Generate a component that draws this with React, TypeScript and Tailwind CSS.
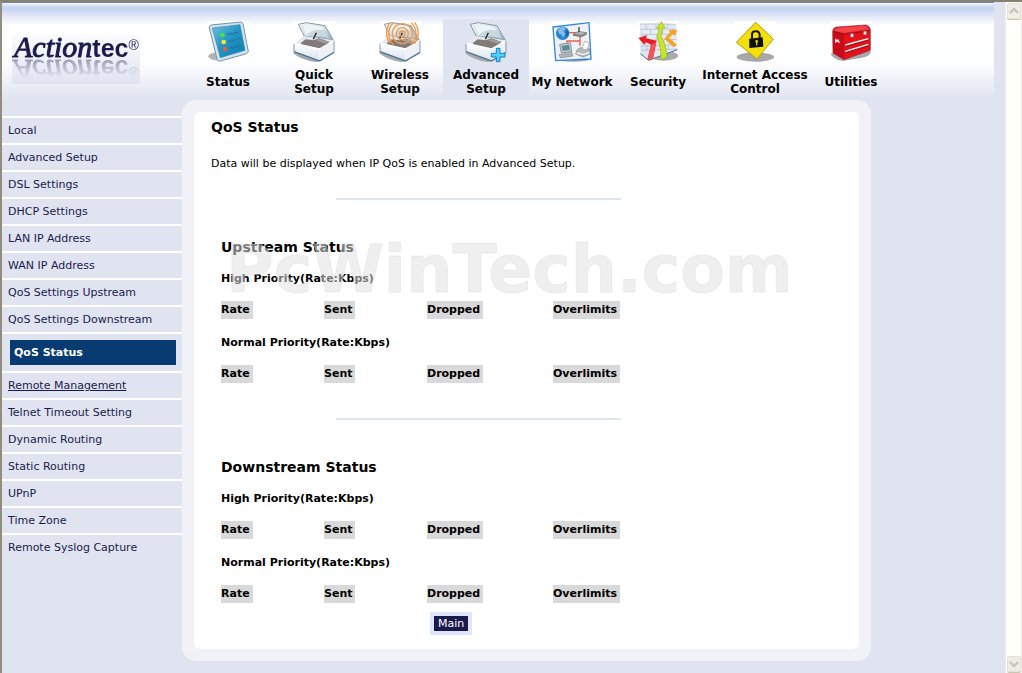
import React from "react";

const IconFrame = ({ children }: { children: React.ReactNode }) => {
  return (
    <svg viewBox="0 0 126 126" className="block h-[42px] w-[42px]" aria-hidden="true">
      {children}
    </svg>
  );
};

const StatusIcon = () => (
  <IconFrame>
    <defs>
      <linearGradient id="screen" x1="0" y1="0" x2="1" y2="1">
        <stop offset="0" stopColor="#6fc0de" />
        <stop offset="0.5" stopColor="#1f93c4" />
        <stop offset="1" stopColor="#0b7db3" />
      </linearGradient>
    </defs>
    <rect width="126" height="126" fill="#fff" />
    <ellipse cx="34" cy="106" rx="30" ry="12" fill="#b4b4b4" />
    <path d="M6 17 L12 12 L102 3 L108 7 L124 92 L119 98 L37 121 L31 118 Z" fill="#d5e2ea" stroke="#6f97b3" strokeWidth="3" />
    <path d="M16 21 L99 11 L114 88 L40 110 Z" fill="url(#screen)" stroke="#3b88ab" strokeWidth="2" />
    <circle cx="46" cy="42" r="7" fill="#3ee83c" />
    <circle cx="50" cy="63" r="7" fill="#f4ea26" />
    <circle cx="54" cy="84" r="7" fill="#ee5a3c" />
    <path d="M59 42 l5 -5 l4 5 l5 -7 l5 5 l6 -7 l5 3 l6 -5 M64 63 l5 -5 l5 4 l6 -7 l3 5 M89 55 l7 -2 M67 84 l5 -5 l5 3 l5 -6 l5 4 l7 -6 l7 2" fill="none" stroke="#2f6590" strokeWidth="3" />
  </IconFrame>
);

const OpenBox = () => (
  <>
    <defs>
      <linearGradient id="lid" x1="0" y1="0" x2="1" y2="1">
        <stop offset="0" stopColor="#fdfeff" />
        <stop offset="0.55" stopColor="#cfdde4" />
        <stop offset="1" stopColor="#93adbb" />
      </linearGradient>
      <linearGradient id="boxside" x1="0" y1="0" x2="0" y2="1">
        <stop offset="0" stopColor="#ffffff" />
        <stop offset="1" stopColor="#d9e2ee" />
      </linearGradient>
    </defs>
    <path d="M2 88 L16 84 L90 118 L68 123 Q30 118 2 98 Z" fill="#a9a9ab" />
    <path d="M16 10 L40 5 L96 14 L121 58 L80 50 L34 46 Z" fill="url(#lid)" stroke="#8298a8" strokeWidth="3" />
    <path d="M25 14 L44 10 L90 18 L108 51 L80 45 L40 42 Z" fill="#c8d8df" />
    <path d="M28 14 L44 10 L88 18 L94 27 Q58 24 40 42 Z" fill="#edf4f6" />
    <path d="M4 67 L32 45 L122 58 L79 84 Z" fill="#e5e9ed" />
    <path d="M23 66 L38 55 L62 58 L79 52 L108 62 L104 72 L79 83 L28 72 Z" fill="#807a7b" />
    <path d="M79 54 L108 63 L100 68 L70 59 Z" fill="#a29c9c" />
    <path d="M61 55 L70 35" stroke="#202020" strokeWidth="4" />
    <path d="M4 67 L79 84 L79 120 L3 92 Z" fill="url(#boxside)" />
    <path d="M79 84 L122 60 L123 94 L79 120 Z" fill="#eef2f8" />
    <path d="M4 67 L79 84 L122 60" fill="none" stroke="#fff" strokeWidth="4" />
    <path d="M3 92 L79 120 L123 94" fill="none" stroke="#487598" strokeWidth="4" />
    <path d="M3 68 L3 92 M123 60 L123 94" stroke="#839cb7" strokeWidth="3" />
  </>
);

const QuickIcon = () => (
  <IconFrame>
    <rect width="126" height="126" fill="#fff" />
    <OpenBox />
  </IconFrame>
);

const WirelessIcon = () => (
  <IconFrame>
    <rect width="126" height="126" fill="#fff" />
    <OpenBox />
    <g fill="none" stroke="#f39a4a" strokeWidth="4">
      <circle cx="70" cy="38" r="8" />
      <circle cx="70" cy="38" r="18" />
      <circle cx="70" cy="38" r="30" />
      <path d="M43 5 Q15 37 43 72 M97 5 Q125 37 97 72 M33 3 Q12 37 33 68 M107 3 Q128 37 107 68" />
    </g>
  </IconFrame>
);

const AdvancedIcon = () => (
  <IconFrame>
    <OpenBox />
    <path d="M94 82 H105 V97 H120 V108 H105 V122 H94 V108 H79 V97 H94 Z" fill="#50d0fa" stroke="#137fc2" strokeWidth="3" />
  </IconFrame>
);

const NetworkIcon = () => (
  <IconFrame>
    <rect width="126" height="126" fill="#fff" />
    <ellipse cx="66" cy="114" rx="52" ry="8" fill="#a8a8aa" />
    <path d="M6 18 L114 5 L120 114 L14 119 Z" fill="#f0f1f5" stroke="#2f86e5" strokeWidth="4" />
    <path d="M48 35 H77 M87 40 V60 H48 V72 M87 58 V74" fill="none" stroke="#f0604a" strokeWidth="4" />
    <circle cx="35" cy="37" r="20" fill="#2584d2" />
    <path d="M20 27 Q29 16 40 19 L44 26 L37 29 L43 38 L36 50 L31 41 L24 38 Z" fill="#85bce6" />
    <path d="M48 25 L53 35 L49 48 L44 38 Z" fill="#1960a8" />
    <path d="M65 39 L82 30 L108 34 L107 41 L91 49 L66 44 Z" fill="#818284" />
    <path d="M70 38 L84 32 L104 35 L91 42 Z" fill="#b0b4b6" />
    <path d="M84 18 V34" stroke="#404246" strokeWidth="4" />
    <path d="M26 70 L58 65 L62 91 L31 96 Z" fill="#c5cccf" stroke="#686e73" strokeWidth="2" />
    <path d="M32 74 L54 71 L57 86 L35 90 Z" fill="#568e9d" />
    <path d="M24 101 L62 94 L66 105 L29 111 Z" fill="#aeb4b5" stroke="#85898b" strokeWidth="2" />
    <path d="M78 87 L88 80 L116 84 L116 100 L96 108 L74 99 Z" fill="#b5b8ba" stroke="#7c8084" strokeWidth="2" />
    <path d="M93 83 L101 61 L115 66 L108 87 Z" fill="#fff" stroke="#95999d" strokeWidth="2" />
    <path d="M77 96 L97 101 L115 94" fill="none" stroke="#f7f7f7" strokeWidth="4" />
  </IconFrame>
);

const SecurityIcon = () => (
  <IconFrame>
    <rect width="126" height="126" fill="#fff" />
    <ellipse cx="80" cy="104" rx="43" ry="15" fill="#aaaaac" />
    <path d="M9 9 L42 18 L42 94 L35 119 L10 97 Z" fill="#dce4ee" />
    <path d="M9 9 L80 4 L118 12 L121 88 L35 119 L42 92 Z" fill="#e7ecf3" />
    <path d="M9 9 L117 10 M12 25 L116 24 M13 41 L118 39 M12 58 L119 55 M12 75 L119 71 M12 88 L119 84 M28 11 V25 M57 10 V24 M92 10 V24 M41 25 V40 M77 25 V40 M106 24 V39 M29 41 V56 M60 40 V56 M94 40 V54 M42 57 V73 M106 56 V70 M30 73 V87 M94 72 V85" stroke="#a9b7c7" strokeWidth="2" />
    <path d="M10 98 L35 118 L121 86" fill="none" stroke="#376aa8" strokeWidth="3" />
    <path d="M4 51 L29 43 L27 52 L59 59 L48 113 L31 117 L42 71 L27 64 L22 71 Z" fill="#e91e25" />
    <path d="M42 71 L57 64 L48 113 L31 117 Z" fill="#f1545a" />
    <path d="M73 2 L85 21 L77 20 L72 45 Q88 72 90 108 L72 116 Q73 77 60 49 L67 20 L59 22 Z" fill="#c8e729" stroke="#90b316" strokeWidth="2" />
    <path d="M120 26 L114 45 L108 39 L96 51 L119 71 L110 79 L82 53 L99 34 L94 28 Z" fill="#f7a022" />
  </IconFrame>
);

const AccessIcon = () => (
  <IconFrame>
    <rect width="126" height="126" fill="#fff" />
    <ellipse cx="64" cy="108" rx="56" ry="14" fill="#a7a7a9" />
    <path d="M65 4 L118 54 L69 114 L7 64 Z" fill="#f3df0b" stroke="#b89f12" strokeWidth="3" />
    <path d="M54 53 V41 Q54 31 65 31 Q76 30 77 41 V51" fill="none" stroke="#161408" strokeWidth="6" />
    <path d="M46 53 L86 49 L88 77 L46 81 Z" fill="#111006" />
    <circle cx="68" cy="61" r="4" fill="#ead60c" />
    <path d="M68 62 V73" stroke="#ead60c" strokeWidth="4" />
  </IconFrame>
);

const UtilitiesIcon = () => (
  <IconFrame>
    <rect width="126" height="126" fill="#fff" />
    <path d="M2 98 L18 92 L112 84 L123 92 Q122 106 88 112 L38 120 Q8 115 2 98 Z" fill="#a9a9ab" />
    <path d="M8 31 Q10 18 22 18 L107 12 Q121 15 121 29 L121 88 L42 116 L9 96 Z" fill="#e5121a" stroke="#8a3243" strokeWidth="2" />
    <path d="M10 31 L42 39 L42 115 L9 95 Z" fill="#c70c17" />
    <path d="M12 29 Q17 20 28 20 L106 14 Q113 16 117 25 L42 36 Z" fill="#f4444a" />
    <path d="M10 32 L42 40 L120 29" fill="none" stroke="#92101c" strokeWidth="3" />
    <path d="M46 72 L115 53 M46 91 L115 70" stroke="#fff" strokeWidth="4" />
    <path d="M47 77 L115 58 M47 96 L115 75" stroke="#9b1320" strokeWidth="3" />
    <path d="M62 38 h8 v10 h-8 Z M101 31 h8 v10 h-8 Z" fill="#f1f1f5" stroke="#8b858f" strokeWidth="2" />
    <path d="M17 65 V56 L21 60 L24 57 L28 66" fill="none" stroke="#f5dbe0" strokeWidth="4" />
  </IconFrame>
);

const tabs = [
  { label: "Status", icon: <StatusIcon />, width: "w-[86px]" },
  { label: "Quick\nSetup", icon: <QuickIcon />, width: "w-[86px]" },
  { label: "Wireless\nSetup", icon: <WirelessIcon />, width: "w-[86px]" },
  { label: "Advanced\nSetup", icon: <AdvancedIcon />, width: "w-[86px]", active: true },
  { label: "My Network", icon: <NetworkIcon />, width: "w-[86px]" },
  { label: "Security", icon: <SecurityIcon />, width: "w-[86px]" },
  { label: "Internet Access\nControl", icon: <AccessIcon />, width: "w-[108px]" },
  { label: "Utilities", icon: <UtilitiesIcon />, width: "w-[84px]" },
];

const menu = [
  "Local",
  "Advanced Setup",
  "DSL Settings",
  "DHCP Settings",
  "LAN IP Address",
  "WAN IP Address",
  "QoS Settings Upstream",
  "QoS Settings Downstream",
  "QoS Status",
  "Remote Management",
  "Telnet Timeout Setting",
  "Dynamic Routing",
  "Static Routing",
  "UPnP",
  "Time Zone",
  "Remote Syslog Capture",
];

const Logo = () => {
  return (
    <a
      href="#"
      aria-label="Actiontec home"
      className="mt-[31px] ml-[10px] block h-[50px] w-32 shrink-0 bg-linear-to-b from-[#fbfcfe] to-[#e0e4f1]"
    >
      <span className="flex h-[26px] items-baseline pl-[2px] leading-[26px] text-[#1a1a4f] [-webkit-box-reflect:below_-3px_linear-gradient(transparent_20%,rgba(0,0,0,0.45))]">
        <span className="font-['Liberation_Serif',serif] text-[30px] italic [-webkit-text-stroke:1px_#1a1a4f]">
          Action
        </span>
        <span className="font-['Liberation_Sans',sans-serif] text-[25px] font-bold">tec</span>
        <sup className="font-['Liberation_Sans',sans-serif] text-[14px] leading-none">®</sup>
      </span>
    </a>
  );
};

const PriorityTable = ({ title }: { title: string }) => {
  return (
    <table className="mt-4 w-[400px] table-fixed border-collapse text-left text-[11px]">
      <caption className="mb-[14px] text-left leading-4 font-bold">{title}</caption>
      <colgroup>
        <col className="w-[103px]" />
        <col className="w-[103px]" />
        <col className="w-[126px]" />
        <col />
      </colgroup>
      <thead>
        <tr>
          {["Rate", "Sent", "Dropped", "Overlimits"].map((name) => (
            <th key={name} scope="col" className="p-0">
              <span className="block w-fit bg-[#d9d9d9] pr-[3px] leading-[18px]">{name}</span>
            </th>
          ))}
        </tr>
      </thead>
    </table>
  );
};

const StatusSection = ({ title }: { title: string }) => {
  return (
    <section className="pl-[10px]">
      <h2 className="text-[14px] leading-4 font-bold">{title}</h2>
      <PriorityTable title="High Priority(Rate:Kbps)" />
      <PriorityTable title="Normal Priority(Rate:Kbps)" />
    </section>
  );
};

const Scrollbar = () => {
  const button =
    "flex h-4 w-[14px] items-center justify-center rounded-xs border border-[#e3e2d8] bg-[#efeee6] shadow-[0_1px_0_#c9c6b4]";
  return (
    <div className="flex w-[17px] shrink-0 flex-col items-center justify-between border-x border-[#eeede5] bg-[#fefefa] py-px">
      <button type="button" aria-label="Scroll up" className={button}>
        <svg viewBox="0 0 10 8" className="h-2 w-[10px]">
          <path d="M1 6 L5 2 L9 6" fill="none" stroke="#c6c5bb" strokeWidth="2.4" />
        </svg>
      </button>
      <button type="button" aria-label="Scroll down" className={button}>
        <svg viewBox="0 0 10 8" className="h-2 w-[10px]">
          <path d="M1 2 L5 6 L9 2" fill="none" stroke="#c6c5bb" strokeWidth="2.4" />
        </svg>
      </button>
    </div>
  );
};

const App = () => {
  return (
    <div className="flex min-h-screen border-t-2 border-l-2 border-t-[#85826f] border-l-[#928e7f] bg-[#e0e4f0] font-['DejaVu_Sans',sans-serif] text-[11px] text-black">
      <div className="min-w-0 flex-1">
        <header className="mr-[11px] flex h-[98px] border-t border-[#6c86c8] bg-[linear-gradient(#ffffff_0px,#dbe4f6_2px,#c1d2f0_5px,#dfe5f5_12px,#ffffff_23px,#fdfeff_60px,#e0e4f0_96px)]">
          <Logo />
          <nav className="mt-4 ml-[45px] flex">
            {tabs.map((tab) => (
              <a
                key={tab.label}
                href="#"
                className={`flex shrink-0 flex-col items-center pt-[2px] ${tab.width} ${tab.active ? "bg-[#e0e4f0]" : ""}`}
              >
                {tab.icon}
                <span className="mt-[5px] flex h-7 items-center text-center text-[12px] leading-[14px] font-bold whitespace-pre">
                  {tab.label}
                </span>
              </a>
            ))}
          </nav>
        </header>

        <div className="flex pb-3">
          <ul className="mt-4 w-[180px] shrink-0 text-[#1a1a4f]">
            {menu.map((item) =>
              item === "QoS Status" ? (
                <li key={item} className="border-t-2 border-white py-[6px] pr-[6px] pl-2">
                  <a href="#" className="block bg-[#063a70] pl-1 leading-[25px] font-bold text-white">
                    {item}
                  </a>
                </li>
              ) : (
                <li key={item} className="border-t-2 border-white pl-[6px] leading-[25px]">
                  <a href="#" className={item === "Remote Management" ? "underline" : ""}>
                    {item}
                  </a>
                </li>
              )
            )}
          </ul>

          <main className="relative w-full max-w-[689px] rounded-[14px] bg-[#f1f2f8] p-3">
            <div className="rounded-md bg-white pt-[7px] pb-[14px] pl-[17px]">
              <div className="w-[410px]">
                <h1 className="text-[14px] leading-4 font-bold">QoS Status</h1>
                <p className="mt-[21px] leading-4">
                  Data will be displayed when IP QoS is enabled in Advanced Setup.
                </p>
                <hr className="mt-[26px] mb-[39px] ml-auto w-[285px] border-t-2 border-[#e0e4f0]" />
                <StatusSection title="Upstream Status" />
                <hr className="mt-[35px] mb-[39px] ml-auto w-[285px] border-t-2 border-[#e0e4f0]" />
                <StatusSection title="Downstream Status" />
                <button
                  type="button"
                  className="mt-[9px] ml-[219px] block border-4 border-[#dfe4ff] bg-[#1a1a4f] px-1 leading-[15px] text-white"
                >
                  Main
                </button>
              </div>
            </div>
            <div className="pointer-events-none absolute top-[134px] left-[44px] text-[65px] leading-[72px] font-bold whitespace-nowrap text-[#e0e0e0]/53 [-webkit-text-stroke:1px_#dcdcdc66]">
              PcWinTech.com
            </div>
          </main>
        </div>
      </div>
      <Scrollbar />
    </div>
  );
};

export default App;
